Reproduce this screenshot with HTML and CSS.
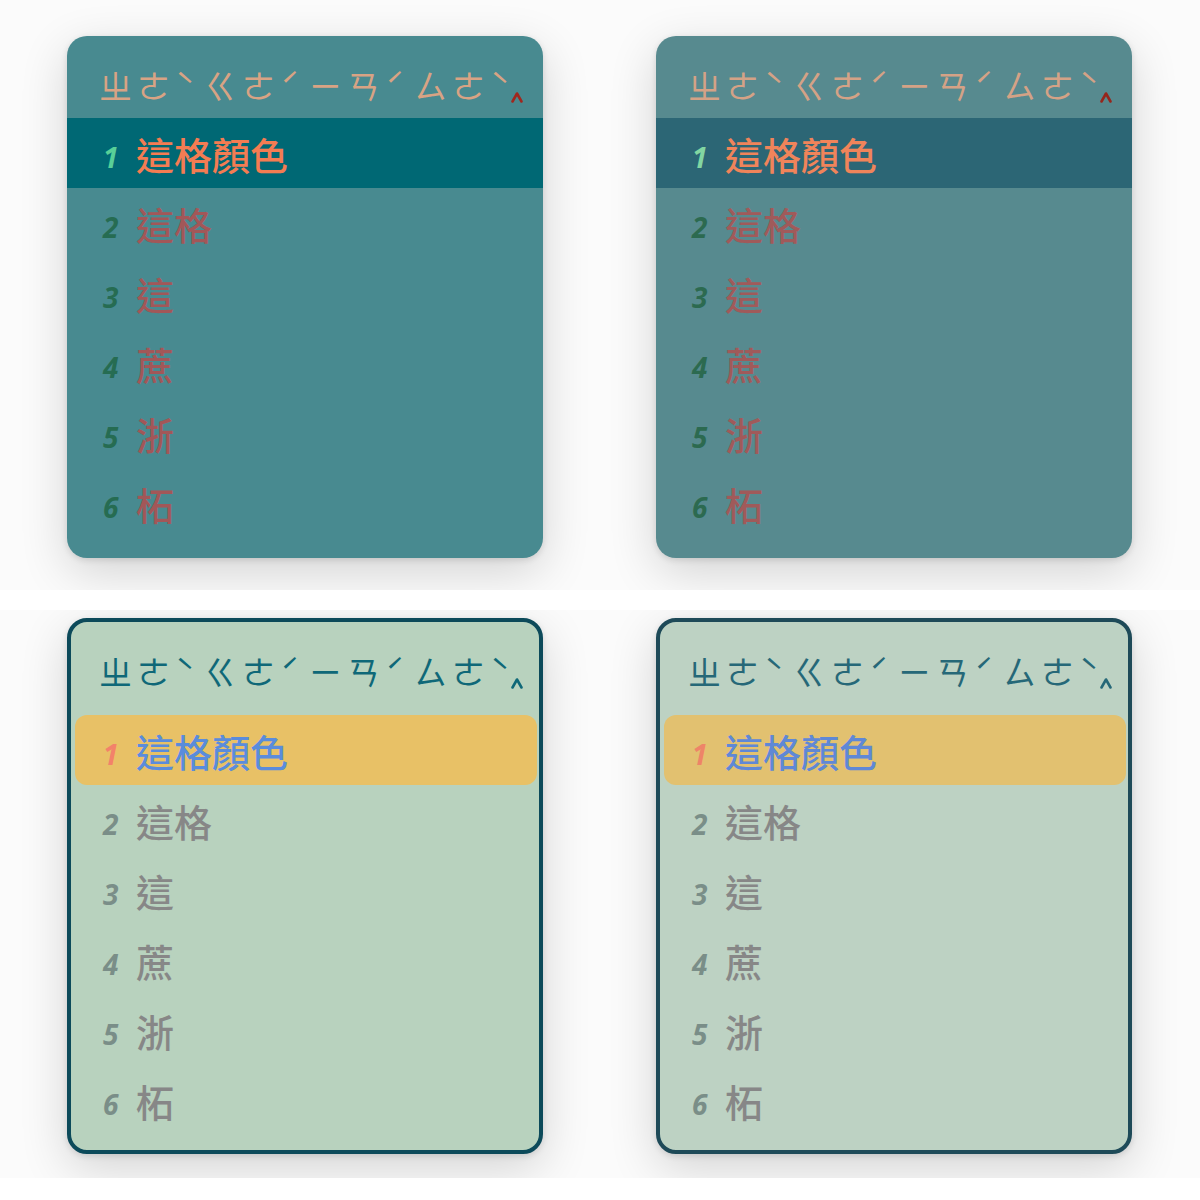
FILE: index.html
```html
<!DOCTYPE html>
<html lang="zh-Hant">
<head>
  <meta charset="UTF-8">
  <title>候選窗配色</title>
  <link rel="stylesheet" href="styles.css">
</head>
<body>

  <!-- 上排：無邊框 -->
  <div class="row row-top">
    <div class="panel flat theme-teal">
      <div class="preedit">ㄓㄜ<span class="tone">ˋ</span>ㄍㄜ<span class="tone">ˊ</span>ㄧㄢ<span class="tone">ˊ</span>ㄙㄜ<span class="tone">ˋ</span><svg class="caret" viewBox="0 0 12 12"><polyline points="1.5,10.5 6,2.5 10.5,10.5"/></svg></div>
      <ul class="candidates">
        <li class="cand active"><span class="label">1</span><span class="text">這格顏色</span></li>
        <li class="cand"><span class="label">2</span><span class="text">這格</span></li>
        <li class="cand"><span class="label">3</span><span class="text">這</span></li>
        <li class="cand"><span class="label">4</span><span class="text">蔗</span></li>
        <li class="cand"><span class="label">5</span><span class="text">浙</span></li>
        <li class="cand"><span class="label">6</span><span class="text">柘</span></li>
      </ul>
    </div>

    <div class="panel flat theme-slate">
      <div class="preedit">ㄓㄜ<span class="tone">ˋ</span>ㄍㄜ<span class="tone">ˊ</span>ㄧㄢ<span class="tone">ˊ</span>ㄙㄜ<span class="tone">ˋ</span><svg class="caret" viewBox="0 0 12 12"><polyline points="1.5,10.5 6,2.5 10.5,10.5"/></svg></div>
      <ul class="candidates">
        <li class="cand active"><span class="label">1</span><span class="text">這格顏色</span></li>
        <li class="cand"><span class="label">2</span><span class="text">這格</span></li>
        <li class="cand"><span class="label">3</span><span class="text">這</span></li>
        <li class="cand"><span class="label">4</span><span class="text">蔗</span></li>
        <li class="cand"><span class="label">5</span><span class="text">浙</span></li>
        <li class="cand"><span class="label">6</span><span class="text">柘</span></li>
      </ul>
    </div>
  </div>

  <!-- 下排：有邊框 -->
  <div class="row row-bottom">
    <div class="panel boxed theme-mint">
      <div class="preedit">ㄓㄜ<span class="tone">ˋ</span>ㄍㄜ<span class="tone">ˊ</span>ㄧㄢ<span class="tone">ˊ</span>ㄙㄜ<span class="tone">ˋ</span><svg class="caret" viewBox="0 0 12 12"><polyline points="1.5,10.5 6,2.5 10.5,10.5"/></svg></div>
      <ul class="candidates">
        <li class="cand active"><span class="label">1</span><span class="text">這格顏色</span></li>
        <li class="cand"><span class="label">2</span><span class="text">這格</span></li>
        <li class="cand"><span class="label">3</span><span class="text">這</span></li>
        <li class="cand"><span class="label">4</span><span class="text">蔗</span></li>
        <li class="cand"><span class="label">5</span><span class="text">浙</span></li>
        <li class="cand"><span class="label">6</span><span class="text">柘</span></li>
      </ul>
    </div>

    <div class="panel boxed theme-sage">
      <div class="preedit">ㄓㄜ<span class="tone">ˋ</span>ㄍㄜ<span class="tone">ˊ</span>ㄧㄢ<span class="tone">ˊ</span>ㄙㄜ<span class="tone">ˋ</span><svg class="caret" viewBox="0 0 12 12"><polyline points="1.5,10.5 6,2.5 10.5,10.5"/></svg></div>
      <ul class="candidates">
        <li class="cand active"><span class="label">1</span><span class="text">這格顏色</span></li>
        <li class="cand"><span class="label">2</span><span class="text">這格</span></li>
        <li class="cand"><span class="label">3</span><span class="text">這</span></li>
        <li class="cand"><span class="label">4</span><span class="text">蔗</span></li>
        <li class="cand"><span class="label">5</span><span class="text">浙</span></li>
        <li class="cand"><span class="label">6</span><span class="text">柘</span></li>
      </ul>
    </div>
  </div>

</body>
</html>
```

FILE: styles.css
```css
:root {
  --fundo: #ffffff;
}

body {
  margin: 0;
  background-color: var(--fundo);
  font-family: "Noto Sans CJK TC", "Noto Sans", sans-serif;
}

.row {
  display: grid;
  grid-template-columns: 476px 476px;
  column-gap: 113px;
  padding: 36px 68px 0 67px;
  overflow: hidden;
  background-color: #fbfbfb;
  box-sizing: border-box;
}

.row-top {
  height: 590px;
}

.row-bottom {
  margin-top: 20px;
  height: 568px;
  padding-top: 8px;
}

.panel {
  border-radius: 20px;
  box-shadow: 0 14px 48px rgba(0, 0, 0, 0.16), 0 2px 6px rgba(0, 0, 0, 0.12);
  overflow: hidden;
  box-sizing: border-box;
}

.flat {
  height: 522px;
}

.boxed {
  height: 536px;
  border: 4px solid var(--borda);
}

.preedit {
  display: flex;
  align-items: center;
  height: 82px;
  padding-left: 32px;
  padding-top: 16px;
  box-sizing: border-box;
  font-size: 33px;
  letter-spacing: 5px;
  color: var(--preedit);
  white-space: nowrap;
}

.boxed .preedit {
  height: 89px;
  padding-left: 28px;
  padding-top: 8px;
}

.tone {
  display: inline-block;
  width: 29px;
  letter-spacing: 0;
}

.caret {
  width: 12px;
  height: 12px;
  margin-left: -8px;
  margin-top: 24px;
  fill: none;
  stroke: var(--caret);
  stroke-width: 2.6;
  stroke-linecap: round;
  stroke-linejoin: round;
}

.candidates {
  list-style: none;
  margin: 0;
  padding: 0;
}

.boxed .candidates {
  padding: 4px 2px 0 4px;
}

.cand {
  display: flex;
  align-items: center;
  height: 70px;
  padding-left: 36px;
}

.boxed .cand {
  padding-left: 28px;
}

.cand.active {
  background-color: var(--destaque);
}

.boxed .cand.active {
  border-radius: 12px;
}

.label {
  width: 33px;
  margin-top: 8px;
  font-family: "Open Sans", "DejaVu Sans", sans-serif;
  font-style: italic;
  font-weight: 700;
  font-size: 28px;
  color: var(--rotulo);
}

.text {
  font-size: 38px;
  font-weight: 500;
  color: var(--texto);
}

.active .label {
  color: var(--rotulo-ativo);
}

.active .text {
  color: var(--texto-ativo);
}

/* temas */
.theme-teal {
  background-color: #488a90;
  --destaque: #006874;
  --preedit: #d8a384;
  --caret: #a0271e;
  --rotulo: #266c52;
  --rotulo-ativo: #58cf98;
  --texto: #a25758;
  --texto-ativo: #f47c52;
}

.theme-slate {
  background-color: #578a8f;
  --destaque: #2c6675;
  --preedit: #d4a286;
  --caret: #96261c;
  --rotulo: #2c6a50;
  --rotulo-ativo: #82d6a2;
  --texto: #a05a5a;
  --texto-ativo: #f0845a;
}

.theme-mint {
  background-color: #b8d2be;
  --borda: #0c4a5a;
  --destaque: #e8c166;
  --preedit: #0f6878;
  --caret: #0f6878;
  --rotulo: #7a8e88;
  --rotulo-ativo: #f3826a;
  --texto: #878787;
  --texto-ativo: #5a8cdc;
}

.theme-sage {
  background-color: #bdd2c3;
  --borda: #1e4a58;
  --destaque: #e2c170;
  --preedit: #266878;
  --caret: #266878;
  --rotulo: #7a8e88;
  --rotulo-ativo: #ee8468;
  --texto: #878787;
  --texto-ativo: #5f88d6;
}
```
